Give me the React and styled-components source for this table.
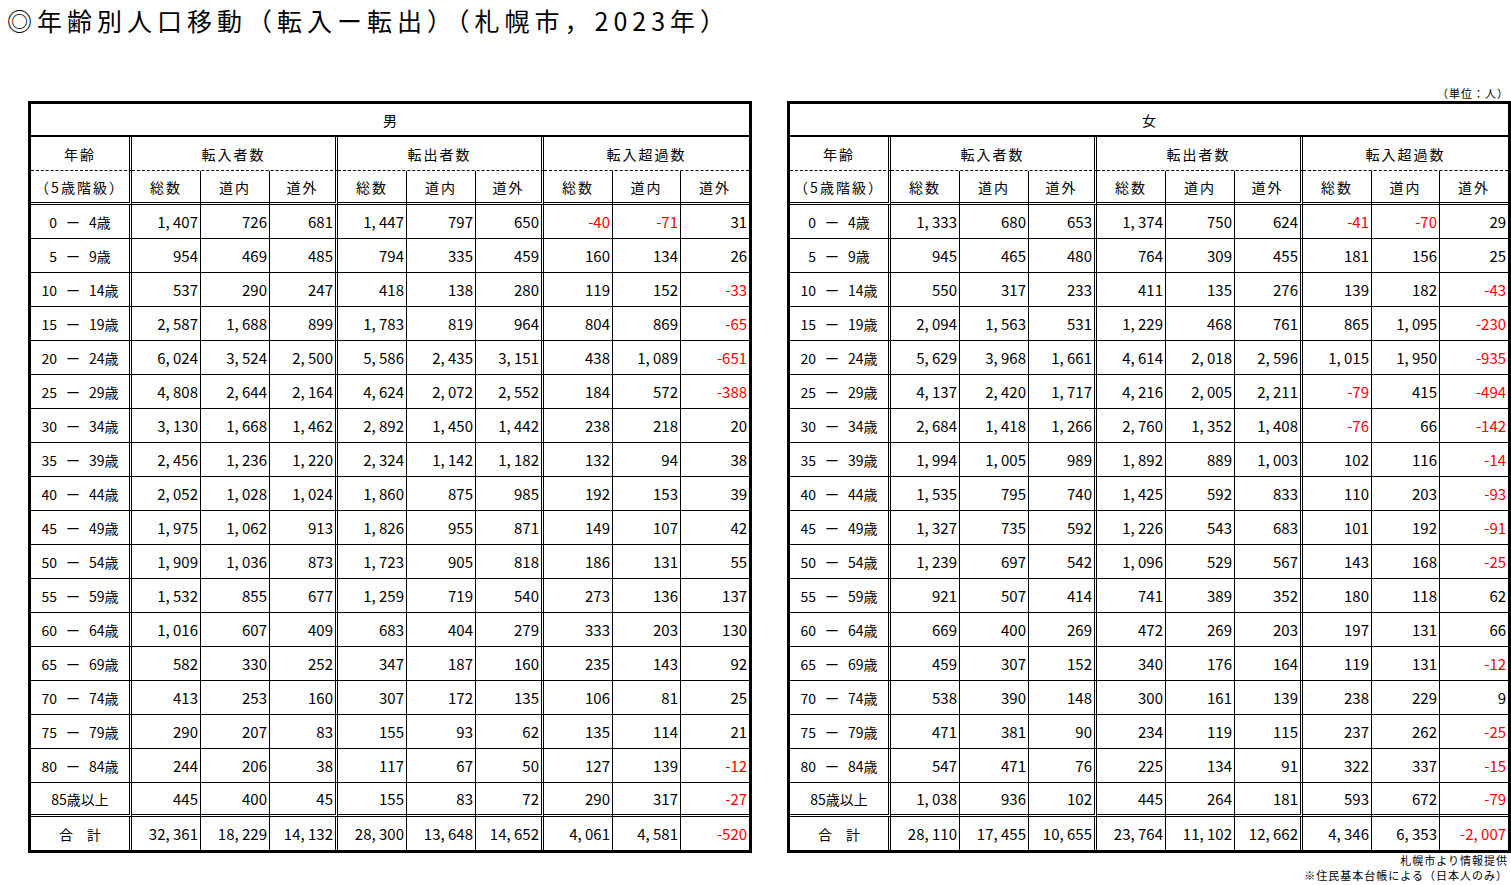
import React from 'react';
import styled, { createGlobalStyle } from 'styled-components';

const GlobalStyle = createGlobalStyle`
  html, body { margin: 0; padding: 0; background: #fff; overflow: hidden; }
  body { font-family: "Noto Sans CJK JP", "Noto Sans", sans-serif; color: #000; }
`;

const Page = styled.div`
  width: 1511px;
  height: 885px;
`;

const Title = styled.h1`
  margin: 0;
  padding-left: 7px;
  height: 44px;
  line-height: 40px;
  font-size: 25px;
  font-weight: 400;
  letter-spacing: 5px;
  white-space: nowrap;
`;

const UnitRow = styled.div`
  margin-top: 42px;
  height: 15px;
  font-size: 11px;
  line-height: 15px;
  text-align: right;
  padding-right: 2px;
  letter-spacing: 1px;
`;

const Tables = styled.div`
  display: flex;
  gap: 35px;
  padding-left: 28px;
`;

const Block = styled.div`
  display: flex;
  flex-direction: column;
  width: 724px;
  flex: none;
`;

const Table = styled.table`
  width: 724px;
  box-sizing: border-box;
  table-layout: fixed;
  border-collapse: separate;
  border-spacing: 0;
  border: 3px solid #000;
  font-size: 14px;
`;

const borderOf = (kind) =>
  kind === 'double' ? '3px double #000'
  : kind === 'single' ? '1px solid #000'
  : kind === 'thick' ? '2px solid #000'
  : kind === 'dashed' ? '1px dashed #000'
  : 'none';

const Cell = styled.td`
  box-sizing: border-box;
  height: ${(p) => p.$h}px;
  padding: 0 ${(p) => (p.$num ? '2px' : '0')} 0 0;
  border-right: ${(p) => borderOf(p.$right)};
  border-bottom: ${(p) => borderOf(p.$bottom)};
  text-align: ${(p) => (p.$num ? 'right' : 'center')};
  vertical-align: middle;
  white-space: nowrap;
  font-size: ${(p) => (p.$num ? '15px' : '14px')};
  color: ${(p) => (p.$neg ? '#ff0000' : '#000')};
  letter-spacing: ${(p) => (p.$spaced ? '2px' : '0')};
  line-height: 1;
`;

const AgeRange = styled.span`
  display: inline-flex;
  align-items: center;
  gap: 9px;
`;

const Notes = styled.div`
  text-align: right;
  font-size: 11px;
  line-height: 15px;
  letter-spacing: 1px;
  padding-right: 3px;
`;

const ages = [
  [0, 4], [5, 9], [10, 14], [15, 19], [20, 24], [25, 29], [30, 34], [35, 39], [40, 44],
  [45, 49], [50, 54], [55, 59], [60, 64], [65, 69], [70, 74], [75, 79], [80, 84],
];

const male = [
  [1407, 726, 681, 1447, 797, 650, -40, -71, 31],
  [954, 469, 485, 794, 335, 459, 160, 134, 26],
  [537, 290, 247, 418, 138, 280, 119, 152, -33],
  [2587, 1688, 899, 1783, 819, 964, 804, 869, -65],
  [6024, 3524, 2500, 5586, 2435, 3151, 438, 1089, -651],
  [4808, 2644, 2164, 4624, 2072, 2552, 184, 572, -388],
  [3130, 1668, 1462, 2892, 1450, 1442, 238, 218, 20],
  [2456, 1236, 1220, 2324, 1142, 1182, 132, 94, 38],
  [2052, 1028, 1024, 1860, 875, 985, 192, 153, 39],
  [1975, 1062, 913, 1826, 955, 871, 149, 107, 42],
  [1909, 1036, 873, 1723, 905, 818, 186, 131, 55],
  [1532, 855, 677, 1259, 719, 540, 273, 136, 137],
  [1016, 607, 409, 683, 404, 279, 333, 203, 130],
  [582, 330, 252, 347, 187, 160, 235, 143, 92],
  [413, 253, 160, 307, 172, 135, 106, 81, 25],
  [290, 207, 83, 155, 93, 62, 135, 114, 21],
  [244, 206, 38, 117, 67, 50, 127, 139, -12],
  [445, 400, 45, 155, 83, 72, 290, 317, -27],
  [32361, 18229, 14132, 28300, 13648, 14652, 4061, 4581, -520],
];

const female = [
  [1333, 680, 653, 1374, 750, 624, -41, -70, 29],
  [945, 465, 480, 764, 309, 455, 181, 156, 25],
  [550, 317, 233, 411, 135, 276, 139, 182, -43],
  [2094, 1563, 531, 1229, 468, 761, 865, 1095, -230],
  [5629, 3968, 1661, 4614, 2018, 2596, 1015, 1950, -935],
  [4137, 2420, 1717, 4216, 2005, 2211, -79, 415, -494],
  [2684, 1418, 1266, 2760, 1352, 1408, -76, 66, -142],
  [1994, 1005, 989, 1892, 889, 1003, 102, 116, -14],
  [1535, 795, 740, 1425, 592, 833, 110, 203, -93],
  [1327, 735, 592, 1226, 543, 683, 101, 192, -91],
  [1239, 697, 542, 1096, 529, 567, 143, 168, -25],
  [921, 507, 414, 741, 389, 352, 180, 118, 62],
  [669, 400, 269, 472, 269, 203, 197, 131, 66],
  [459, 307, 152, 340, 176, 164, 119, 131, -12],
  [538, 390, 148, 300, 161, 139, 238, 229, 9],
  [471, 381, 90, 234, 119, 115, 237, 262, -25],
  [547, 471, 76, 225, 134, 91, 322, 337, -15],
  [1038, 936, 102, 445, 264, 181, 593, 672, -79],
  [28110, 17455, 10655, 23764, 11102, 12662, 4346, 6353, -2007],
];

const colWidths = [101, 69, 69, 68, 69, 69, 68, 69, 68, 68];
const fmt = (n) => (n < 0 ? '-' : '') + Math.abs(n).toLocaleString('en-US').replace(/,/g, ', ');
const rightKind = (i) => (i === 8 ? 'none' : i % 3 === 2 ? 'double' : 'single');

function AgeLabel({ idx }) {
  if (idx < ages.length) {
    const [a, b] = ages[idx];
    return (
      <AgeRange>
        <span>{a}</span>
        <span>ー</span>
        <span>{b}歳</span>
      </AgeRange>
    );
  }
  if (idx === ages.length) return '85歳以上';
  return '合　計';
}

function PopTable({ label, rows }) {
  const last = rows.length - 1;
  return (
    <Table>
      <colgroup>
        {colWidths.map((w, i) => (
          <col key={i} style={{ width: w }} />
        ))}
      </colgroup>
      <tbody>
        <tr>
          <Cell colSpan={10} $h={33} $bottom="thick">{label}</Cell>
        </tr>
        <tr>
          <Cell $h={34} $right="double" $bottom="dashed" $spaced>年齢</Cell>
          <Cell colSpan={3} $h={34} $right="double" $bottom="dashed" $spaced>転入者数</Cell>
          <Cell colSpan={3} $h={34} $right="double" $bottom="dashed" $spaced>転出者数</Cell>
          <Cell colSpan={3} $h={34} $bottom="dashed" $spaced>転入超過数</Cell>
        </tr>
        <tr>
          <Cell $h={34} $right="double" $bottom="double" $spaced>（5歳階級）</Cell>
          {['総数', '道内', '道外', '総数', '道内', '道外', '総数', '道内', '道外'].map((t, i) => (
            <Cell key={i} $h={34} $right={rightKind(i)} $bottom="double" $spaced>{t}</Cell>
          ))}
        </tr>
        {rows.map((r, ri) => {
          const bottom = ri === last ? 'none' : ri === last - 1 ? 'double' : 'single';
          const h = ri === last ? 33 : 34;
          return (
            <tr key={ri}>
              <Cell $h={h} $right="double" $bottom={bottom}>
                <AgeLabel idx={ri} />
              </Cell>
              {r.map((v, ci) => (
                <Cell key={ci} $h={h} $num $neg={v < 0} $right={rightKind(ci)} $bottom={bottom}>
                  {fmt(v)}
                </Cell>
              ))}
            </tr>
          );
        })}
      </tbody>
    </Table>
  );
}

export default function App() {
  return (
    <Page>
      <GlobalStyle />
      <Title>◎年齢別人口移動（転入ー転出）（札幌市，2023年）</Title>
      <UnitRow>（単位：人）</UnitRow>
      <Tables>
        <Block>
          <PopTable label="男" rows={male} />
        </Block>
        <Block>
          <PopTable label="女" rows={female} />
          <Notes>
            <div>札幌市より情報提供</div>
            <div>※住民基本台帳による（日本人のみ）</div>
          </Notes>
        </Block>
      </Tables>
    </Page>
  );
}
